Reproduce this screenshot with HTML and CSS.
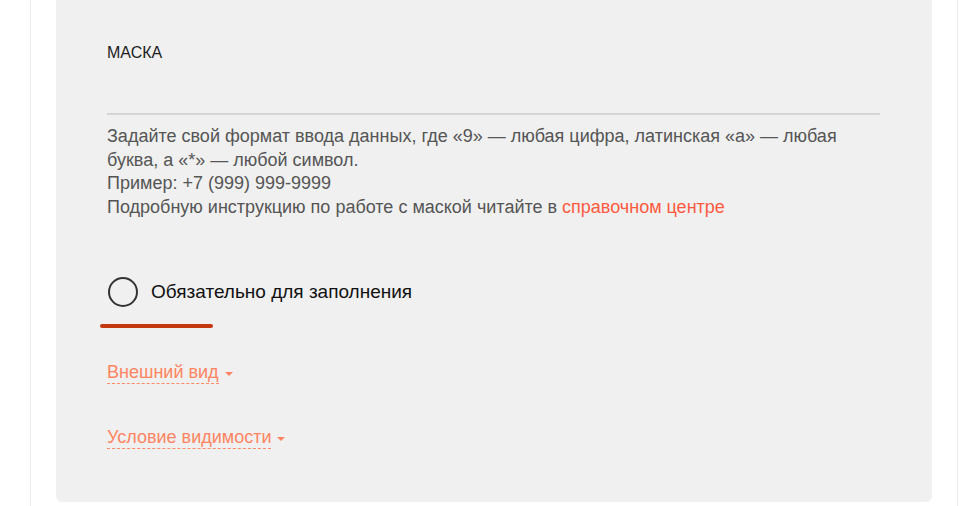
FILE: index.html
```html
<!DOCTYPE html>
<html lang="ru">
<head>
<meta charset="utf-8">
<title>Маска</title>
<link rel="stylesheet" href="styles.css">
</head>
<body>
<div class="page">
  <div class="panel">
    <div class="field-label">МАСКА</div>
    <div class="field-input"></div>
    <div class="hint">
      Задайте свой формат ввода данных, где «9» — любая цифра, латинская «а» — любая<br>буква, а «*» — любой символ.<br>
      Пример: +7 (999) 999-9999<br>
      Подробную инструкцию по работе с маской читайте в <a class="hint-link" href="#">справочном центре</a>
    </div>
    <label class="radio-row">
      <span class="radio"></span>
      <span class="radio-text">Обязательно для заполнения</span>
    </label>
    <div class="active-bar"></div>
    <div class="toggle toggle-first">
      <span class="toggle-text">Внешний вид</span><span class="caret"></span>
    </div>
    <div class="toggle toggle-second">
      <span class="toggle-text">Условие видимости</span><span class="caret"></span>
    </div>
  </div>
</div>
</body>
</html>
```

FILE: styles.css
```css
html, body {
  margin: 0;
  padding: 0;
  background: #ffffff;
}

body {
  font-family: "Liberation Sans", Arial, sans-serif;
  overflow: hidden;
}

.page {
  margin-left: 30px;
  width: 926px;
  height: 506px;
  border-left: 1px solid #ececec;
  border-right: 1px solid #ececec;
}

.panel {
  margin-left: 25px;
  width: 876px;
  height: 502px;
  box-sizing: border-box;
  background: #f0f0f0;
  border-radius: 0 0 6px 6px;
  padding: 44px 52px 0 51px;
  display: flex;
  flex-direction: column;
  align-items: flex-start;
}

.field-label {
  font-size: 16px;
  line-height: 18px;
  color: #1e1e1e;
}

.field-input {
  align-self: stretch;
  height: 51px;
  border-bottom: 2px solid #d5d5d5;
}

.hint {
  margin-top: 10px;
  font-size: 18px;
  line-height: 23.5px;
  color: #555555;
}

.hint-link {
  color: #ff5a40;
  text-decoration: none;
}

.radio-row {
  margin-top: 58px;
  display: flex;
  align-items: center;
  gap: 13px;
  height: 30px;
  margin-left: 1px;
}

.radio {
  width: 30px;
  height: 30px;
  box-sizing: border-box;
  border: 2px solid #333333;
  border-radius: 50%;
}

.radio-text {
  font-size: 19px;
  color: #111111;
}

.active-bar {
  margin-top: 17px;
  margin-left: -7px;
  width: 113px;
  height: 4px;
  border-radius: 2px;
  background: #c4380f;
}

.toggle {
  display: flex;
  align-items: center;
  color: #ff8562;
  font-size: 18px;
  line-height: 21px;
}

.toggle-first {
  margin-top: 34px;
}

.toggle-second {
  margin-top: 43px;
}

.toggle-text {
  border-bottom: 1px dashed #ff8a6a;
}

.caret {
  width: 0;
  height: 0;
  margin-left: 6px;
  margin-top: 1px;
  border-left: 4px solid transparent;
  border-right: 4px solid transparent;
  border-top: 4px solid #ff8562;
}
```
